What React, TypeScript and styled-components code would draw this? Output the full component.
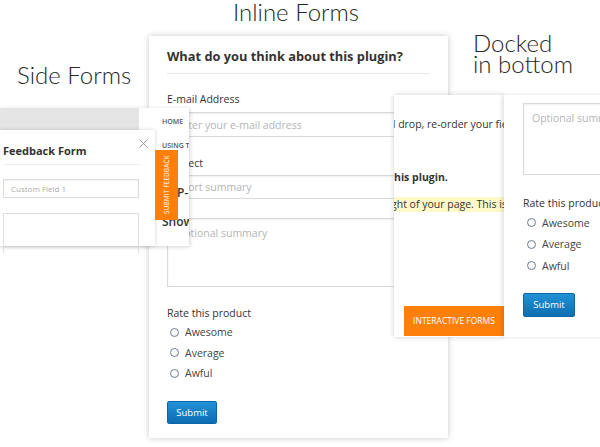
import React from "react";
import styled, { createGlobalStyle } from "styled-components";

const GlobalStyle = createGlobalStyle`
  html, body {
    margin: 0;
    padding: 0;
    background: #fff;
  }
  body {
    font-family: "Open Sans", "Liberation Sans", sans-serif;
    color: #333;
  }
  * {
    box-sizing: border-box;
  }
`;

const Canvas = styled.div`
  position: relative;
  width: 600px;
  height: 447px;
  overflow: hidden;
  background: #fff;
`;

interface PlaceProps {
  $x: number;
  $y: number;
}

const Caption = styled.div<PlaceProps>`
  position: absolute;
  left: ${(p) => p.$x}px;
  top: ${(p) => p.$y}px;
  font-family: Lato, "Open Sans", sans-serif;
  font-weight: 300;
  font-size: 24px;
  line-height: 21px;
  color: #262626;
  white-space: nowrap;
`;

/* ---------- inline form ---------- */

const InlineCard = styled.div`
  position: absolute;
  left: 149px;
  top: 36px;
  width: 299px;
  height: 402px;
  background: #fff;
  box-shadow: 0 0 6px rgba(0, 0, 0, 0.22);
  padding: 10px 18px 0;
  display: flex;
  flex-direction: column;
`;

const CardTitle = styled.h3`
  margin: 0;
  padding-bottom: 6px;
  border-bottom: 1px solid #e8e8e8;
  font-size: 12.8px;
  line-height: 21px;
  font-weight: 700;
  color: #333;
  white-space: nowrap;
`;

interface GapProps {
  $mt: number;
}

const Label = styled.div<GapProps>`
  margin-top: ${(p) => p.$mt}px;
  font-size: 10.5px;
  line-height: 16px;
  color: #333;
  white-space: nowrap;
`;

interface FieldProps extends GapProps {
  $h: number;
}

const TextInput = styled.input<FieldProps>`
  display: block;
  width: 100%;
  margin: ${(p) => p.$mt}px 0 0;
  height: ${(p) => p.$h}px;
  padding: 0 8px;
  border: 1px solid #d9d9d9;
  box-shadow: inset 0 1px 2px rgba(0, 0, 0, 0.07);
  background: #fff;
  font-family: inherit;
  font-size: 10.5px;
  outline: none;
  &::placeholder {
    color: #b5b5b5;
  }
`;

const TextArea = styled.textarea<FieldProps>`
  display: block;
  width: 100%;
  margin: ${(p) => p.$mt}px 0 0;
  height: ${(p) => p.$h}px;
  padding: 7px 8px;
  border: 1px solid #d9d9d9;
  box-shadow: inset 0 1px 2px rgba(0, 0, 0, 0.07);
  background: #fff;
  font-family: inherit;
  font-size: 10.5px;
  line-height: 14px;
  resize: none;
  outline: none;
  &::placeholder {
    color: #b5b5b5;
  }
`;

const RadioList = styled.div`
  display: flex;
  flex-direction: column;
  margin-top: 1px;
`;

const RadioRow = styled.label`
  display: flex;
  align-items: center;
  gap: 6px;
  height: 20.5px;
  padding-left: 3px;
  font-size: 10.5px;
  color: #444;
`;

const RadioDot = styled.span`
  width: 9px;
  height: 9px;
  border-radius: 50%;
  border: 1px solid #6f7f90;
  background: radial-gradient(circle at 50% 40%, #fff 0%, #fff 45%, #e4e8ec 100%);
`;

const SubmitButton = styled.button<GapProps>`
  margin-top: ${(p) => p.$mt}px;
  align-self: flex-start;
  width: 50px;
  height: 23px;
  padding: 0;
  border: 1px solid #0c65a6;
  border-radius: 2px;
  background: linear-gradient(#2291d6, #0d6db2);
  color: #fff;
  font-family: inherit;
  font-size: 9.5px;
`;

/* ---------- side form ---------- */

const SideShot = styled.div`
  position: absolute;
  left: 0;
  top: 108px;
  width: 189px;
  height: 138px;
  display: flex;
  box-shadow: 1px 1px 4px rgba(0, 0, 0, 0.18);
  background: #fff;
`;

const GrayCol = styled.div`
  width: 139px;
`;

const GrayBar = styled.div`
  height: 22px;
  background: #e5e5e5;
`;

const NavCol = styled.div`
  width: 50px;
  overflow: hidden;
  padding-left: 23px;
  display: flex;
  flex-direction: column;
`;

const NavItem = styled.div`
  margin-top: 14px;
  font-size: 7px;
  line-height: 10px;
  font-weight: 600;
  color: #555;
  white-space: nowrap;
  &:first-child {
    margin-top: 9px;
  }
`;

const PageText = styled.div<GapProps & { $indent?: number }>`
  margin-top: ${(p) => p.$mt}px;
  padding-left: ${(p) => p.$indent ?? 0}px;
  font-size: 12px;
  line-height: 12px;
  font-weight: 600;
  color: #333;
  white-space: nowrap;
`;

const FlyPanel = styled.div`
  position: absolute;
  left: 0;
  top: 22px;
  width: 155px;
  height: 116px;
  background: #fff;
  box-shadow: 0 0 4px rgba(0, 0, 0, 0.18);
  padding: 0 16px 0 3px;
`;

const FlyHeader = styled.div`
  padding: 14px 0 6px;
  border-bottom: 1px solid #eee;
  font-size: 11px;
  line-height: 14px;
  font-weight: 700;
  color: #333;
`;

const CloseIcon = styled.svg`
  position: absolute;
  right: 7px;
  top: 9px;
`;

const FlyInput = styled.input`
  display: block;
  width: 100%;
  height: 19px;
  margin: 14px 0 0;
  padding: 0 7px;
  border: 1px solid #ddd;
  box-shadow: inset 0 1px 1px rgba(0, 0, 0, 0.05);
  font-family: inherit;
  font-size: 8px;
  outline: none;
  &::placeholder {
    color: #aaa;
  }
`;

const FlyArea = styled.div`
  height: 40px;
  margin-top: 15px;
  border: 1px solid #ddd;
  border-bottom: none;
`;

const SideTab = styled.div`
  position: absolute;
  left: 100%;
  top: 20px;
  width: 23px;
  height: 70px;
  background: #ff7f0b;
  color: #fff;
  display: flex;
  align-items: center;
  justify-content: center;
  font-size: 6.5px;
  letter-spacing: 0.1px;
  writing-mode: vertical-rl;
  transform: rotate(180deg);
  white-space: nowrap;
`;

/* ---------- docked form ---------- */

const Docked = styled.div`
  position: absolute;
  left: 394px;
  top: 95px;
  height: 242px;
  display: flex;
`;

const DockPage = styled.div`
  width: 110px;
  background: #fff;
  box-shadow: 0 0 5px rgba(0, 0, 0, 0.2);
  overflow: hidden;
  display: flex;
  flex-direction: column;
  padding-top: 21px;
  font-size: 10.5px;
  line-height: 16px;
  color: #333;
`;

const DockLine = styled.div<GapProps & { $bold?: boolean; $shift?: number }>`
  margin-top: ${(p) => p.$mt}px;
  margin-left: ${(p) => p.$shift ?? 0}px;
  font-weight: ${(p) => (p.$bold ? 700 : 400)};
  white-space: nowrap;
`;

const Highlight = styled.div`
  margin-top: 12px;
  height: 15px;
  line-height: 15px;
  background: #fff9c8;
  white-space: nowrap;
  text-indent: -3px;
`;

const OrangeButton = styled.div`
  margin: auto 0 1px 10px;
  width: 100px;
  height: 30px;
  background: #ff7f0b;
  color: #fff;
  font-size: 8.5px;
  display: flex;
  align-items: center;
  justify-content: center;
  white-space: nowrap;
`;

const DockForm = styled.div`
  width: 140px;
  background: #fff;
  box-shadow: -2px 0 4px rgba(0, 0, 0, 0.12);
  padding: 8px 0 0 19px;
  display: flex;
  flex-direction: column;
`;

const DockRadioRow = styled(RadioRow)`
  height: 21.5px;
  padding-left: 4px;
`;

const DockSubmit = styled(SubmitButton)`
  width: 52px;
  height: 24px;
`;

function Radios({ Row }: { Row: typeof RadioRow }) {
  return (
    <RadioList>
      {["Awesome", "Average", "Awful"].map((r) => (
        <Row key={r}>
          <RadioDot />
          {r}
        </Row>
      ))}
    </RadioList>
  );
}

export default function App() {
  return (
    <>
      <GlobalStyle />
      <Canvas>
        <Caption $x={233} $y={1}>
          Inline Forms
        </Caption>
        <Caption $x={17} $y={64}>
          Side Forms
        </Caption>
        <Caption $x={473} $y={32}>
          Docked
          <br />
          in bottom
        </Caption>

        <InlineCard>
          <CardTitle>What do you think about this plugin?</CardTitle>
          <Label $mt={17}>E-mail Address</Label>
          <TextInput $mt={5} $h={25} placeholder="Enter your e-mail address" readOnly />
          <Label $mt={18}>Subject</Label>
          <TextInput $mt={4} $h={24} placeholder="Short summary" readOnly />
          <TextArea $mt={19} $h={69} placeholder="Optional summary" readOnly />
          <Label $mt={18}>Rate this product</Label>
          <Radios Row={RadioRow} />
          <SubmitButton $mt={17}>Submit</SubmitButton>
        </InlineCard>

        <SideShot>
          <GrayCol>
            <GrayBar />
          </GrayCol>
          <NavCol>
            <NavItem>HOME</NavItem>
            <NavItem>USING THE PLUGIN</NavItem>
            <PageText $mt={36} $indent={15}>
              P-F
            </PageText>
            <PageText $mt={17}>Show</PageText>
          </NavCol>
          <FlyPanel>
            <CloseIcon width="9" height="9" viewBox="0 0 9 9">
              <path d="M0.5 0.5 L8.5 8.5 M8.5 0.5 L0.5 8.5" stroke="#9a9a9a" strokeWidth="1" />
            </CloseIcon>
            <FlyHeader>Feedback Form</FlyHeader>
            <FlyInput placeholder="Custom Field 1" readOnly />
            <FlyArea />
            <SideTab>SUBMIT FEEDBACK</SideTab>
          </FlyPanel>
        </SideShot>

        <Docked>
          <DockPage>
            <DockLine $mt={0} $shift={-5}>
              d drop, re-order your fields
            </DockLine>
            <DockLine $mt={37} $bold>
              his plugin.
            </DockLine>
            <Highlight>ght of your page. This is</Highlight>
            <OrangeButton>INTERACTIVE FORMS</OrangeButton>
          </DockPage>
          <DockForm>
            <TextArea $mt={0} $h={72} placeholder="Optional summary" readOnly />
            <Label $mt={20}>Rate this product</Label>
            <Radios Row={DockRadioRow} />
            <DockSubmit $mt={16}>Submit</DockSubmit>
          </DockForm>
        </Docked>
      </Canvas>
    </>
  );
}
